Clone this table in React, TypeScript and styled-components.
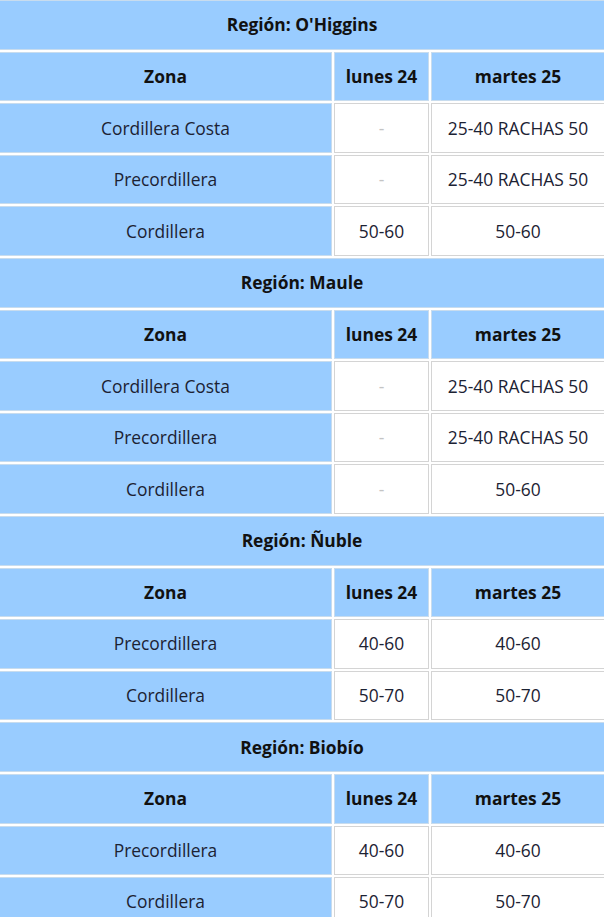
import React from "react";
import styled, { createGlobalStyle } from "styled-components";

const GlobalStyle = createGlobalStyle`
  html, body {
    margin: 0;
    padding: 0;
    background: #ffffff;
  }
  body {
    font-family: "Open Sans", "Noto Sans", Arial, sans-serif;
  }
`;

const Frame = styled.div`
  width: 604px;
  overflow: hidden;
`;

const Table = styled.table`
  width: 610px;
  margin: -2px 0 0 -3px;
  border-collapse: separate;
  border-spacing: 2px;
  background: #ffffff;
  table-layout: fixed;
  font-size: 17.4px;
  color: #1c2233;
`;

const Cell = styled.td`
  border: 1px solid #d4d4d4;
  height: 49.6px;
  padding: 0 4px;
  box-sizing: border-box;
  text-align: center;
  vertical-align: middle;
  line-height: 1.2;
`;

const RegionCell = styled(Cell).attrs({ as: "th" })`
  background: #99ccff;
  border-color: #c8dcee;
  font-weight: 700;
  color: #111111;
`;

const HeadCell = styled(Cell).attrs({ as: "th" })`
  background: #99ccff;
  border-color: #c8dcee;
  font-weight: 700;
  color: #111111;
`;

const ZoneCell = styled(Cell)`
  background: #99ccff;
  border-color: #c8dcee;
`;

const ValueCell = styled(Cell)<{ $empty?: boolean }>`
  background: #ffffff;
  color: ${(p) => (p.$empty ? "#c4c4c4" : "#1c2233")};
`;

type Row = { zona: string; lunes: string; martes: string };
type Region = { name: string; rows: Row[] };

const data: Region[] = [
  {
    name: "O'Higgins",
    rows: [
      { zona: "Cordillera Costa", lunes: "-", martes: "25-40 RACHAS 50" },
      { zona: "Precordillera", lunes: "-", martes: "25-40 RACHAS 50" },
      { zona: "Cordillera", lunes: "50-60", martes: "50-60" },
    ],
  },
  {
    name: "Maule",
    rows: [
      { zona: "Cordillera Costa", lunes: "-", martes: "25-40 RACHAS 50" },
      { zona: "Precordillera", lunes: "-", martes: "25-40 RACHAS 50" },
      { zona: "Cordillera", lunes: "-", martes: "50-60" },
    ],
  },
  {
    name: "Ñuble",
    rows: [
      { zona: "Precordillera", lunes: "40-60", martes: "40-60" },
      { zona: "Cordillera", lunes: "50-70", martes: "50-70" },
    ],
  },
  {
    name: "Biobío",
    rows: [
      { zona: "Precordillera", lunes: "40-60", martes: "40-60" },
      { zona: "Cordillera", lunes: "50-70", martes: "50-70" },
    ],
  },
];

export default function App() {
  return (
    <>
      <GlobalStyle />
      <Frame>
        <Table>
          <colgroup>
            <col style={{ width: 333 }} />
            <col style={{ width: 95 }} />
            <col />
          </colgroup>
          {data.map((region) => (
            <tbody key={region.name}>
              <tr>
                <RegionCell colSpan={3}>Región: {region.name}</RegionCell>
              </tr>
              <tr>
                <HeadCell>Zona</HeadCell>
                <HeadCell>lunes 24</HeadCell>
                <HeadCell>martes 25</HeadCell>
              </tr>
              {region.rows.map((r) => (
                <tr key={r.zona}>
                  <ZoneCell>{r.zona}</ZoneCell>
                  <ValueCell $empty={r.lunes === "-"}>{r.lunes}</ValueCell>
                  <ValueCell $empty={r.martes === "-"}>{r.martes}</ValueCell>
                </tr>
              ))}
            </tbody>
          ))}
        </Table>
      </Frame>
    </>
  );
}
